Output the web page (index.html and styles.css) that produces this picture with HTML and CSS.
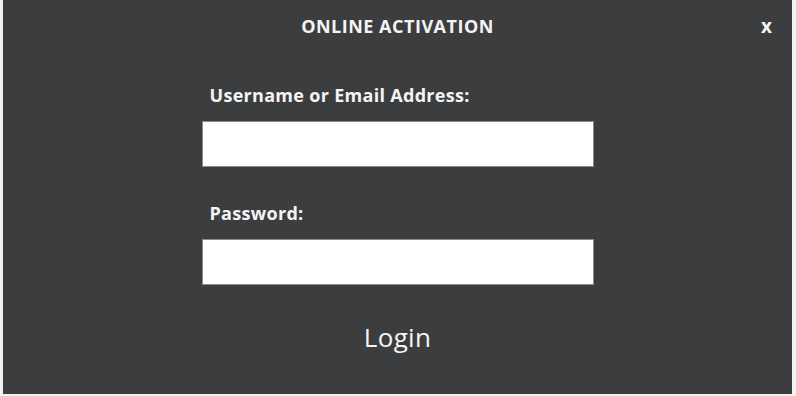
FILE: index.html
```html
<!DOCTYPE html>
<html lang="en">
<head>
    <meta charset="UTF-8">
    <title>Online Activation</title>
    <link rel="stylesheet" href="styles.css">
</head>
<body>
    <div class="dialog">
        <div class="dialog-header">
            <h1>ONLINE ACTIVATION</h1>
            <span class="close-btn">x</span>
        </div>
        <form class="login-form">
            <label for="username">Username or Email Address:</label>
            <input type="text" id="username">
            <label for="password">Password:</label>
            <input type="password" id="password">
            <button type="button" class="login-btn">Login</button>
        </form>
    </div>
</body>
</html>
```

FILE: styles.css
```css
body {
    margin: 0;
    padding: 0;
    background-color: #f2f2f2;
    font-family: 'Open Sans', sans-serif;
}
.dialog {
    margin-left: 3px;
    width: 789px;
    height: 394px;
    background-color: #3c3d3f;
    color: #f4f4f4;
    box-sizing: border-box;
}
.dialog-header {
    position: relative;
    height: 52px;
    display: flex;
    align-items: center;
    justify-content: center;
}
.dialog-header h1 {
    margin: 0;
    font-size: 18px;
    font-weight: bold;
    letter-spacing: 0.5px;
}
.close-btn {
    position: absolute;
    right: 20px;
    top: 13px;
    font-size: 19px;
    font-weight: bold;
}
.login-form {
    width: 392px;
    margin: 0 auto;
    padding-top: 31px;
    display: flex;
    flex-direction: column;
}
.login-form label {
    font-size: 18px;
    line-height: 24px;
    font-weight: bold;
    padding-left: 8px;
    margin-bottom: 14px;
    letter-spacing: 0.3px;
}
.login-form input {
    height: 46px;
    border: 1px solid #8a8a8a;
    background-color: white;
    box-sizing: border-box;
    margin-bottom: 34px;
}
.login-form input#password {
    margin-bottom: 34px;
}
.login-btn {
    align-self: center;
    background: none;
    border: none;
    color: #f4f4f4;
    font-family: 'Open Sans', sans-serif;
    font-size: 26px;
    line-height: 36px;
    letter-spacing: 0.3px;
    padding: 0;
    cursor: pointer;
}
```
